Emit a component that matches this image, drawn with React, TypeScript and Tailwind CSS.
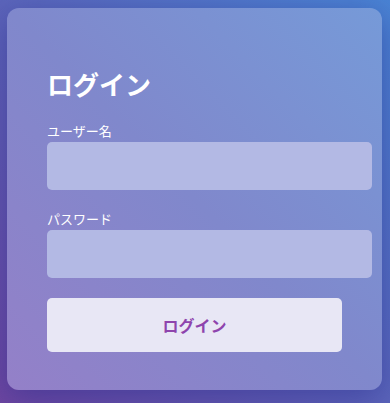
import React from "react";

export default function App() {
  return (
    <div
      className="w-[390px] h-[403px] overflow-hidden bg-[linear-gradient(to_top_right,#6e46a0,#4a84d4)] pl-[7px] pt-[8px]"
      style={{ fontFamily: '"Noto Sans CJK JP", "Noto Sans", sans-serif' }}
    >
      <div className="w-[375px] h-[382px] rounded-[12px] bg-[linear-gradient(to_top_right,#9480c8,#8088cc_50%,#769ad8)] shadow-[0_8px_32px_rgba(31,38,135,0.45)] pl-[40px] pt-[55px]">
        <h1 className="text-[26px] leading-[42px] font-bold text-white m-0">ログイン</h1>
        <div className="mt-[16px] text-[13px] leading-[20px] text-white">ユーザー名</div>
        <div className="mt-[1px] w-[325px] h-[48px] rounded-[5px] bg-[#b3b9e4]" />
        <div className="mt-[19px] text-[13px] leading-[20px] text-white">パスワード</div>
        <div className="mt-[1px] w-[325px] h-[48px] rounded-[5px] bg-[#b3b9e4]" />
        <button className="mt-[20px] w-[295px] h-[54px] rounded-[5px] bg-[#e8e7f5] text-[16px] font-bold text-[#8e44ad] flex items-center justify-center">
          ログイン
        </button>
      </div>
    </div>
  );
}
